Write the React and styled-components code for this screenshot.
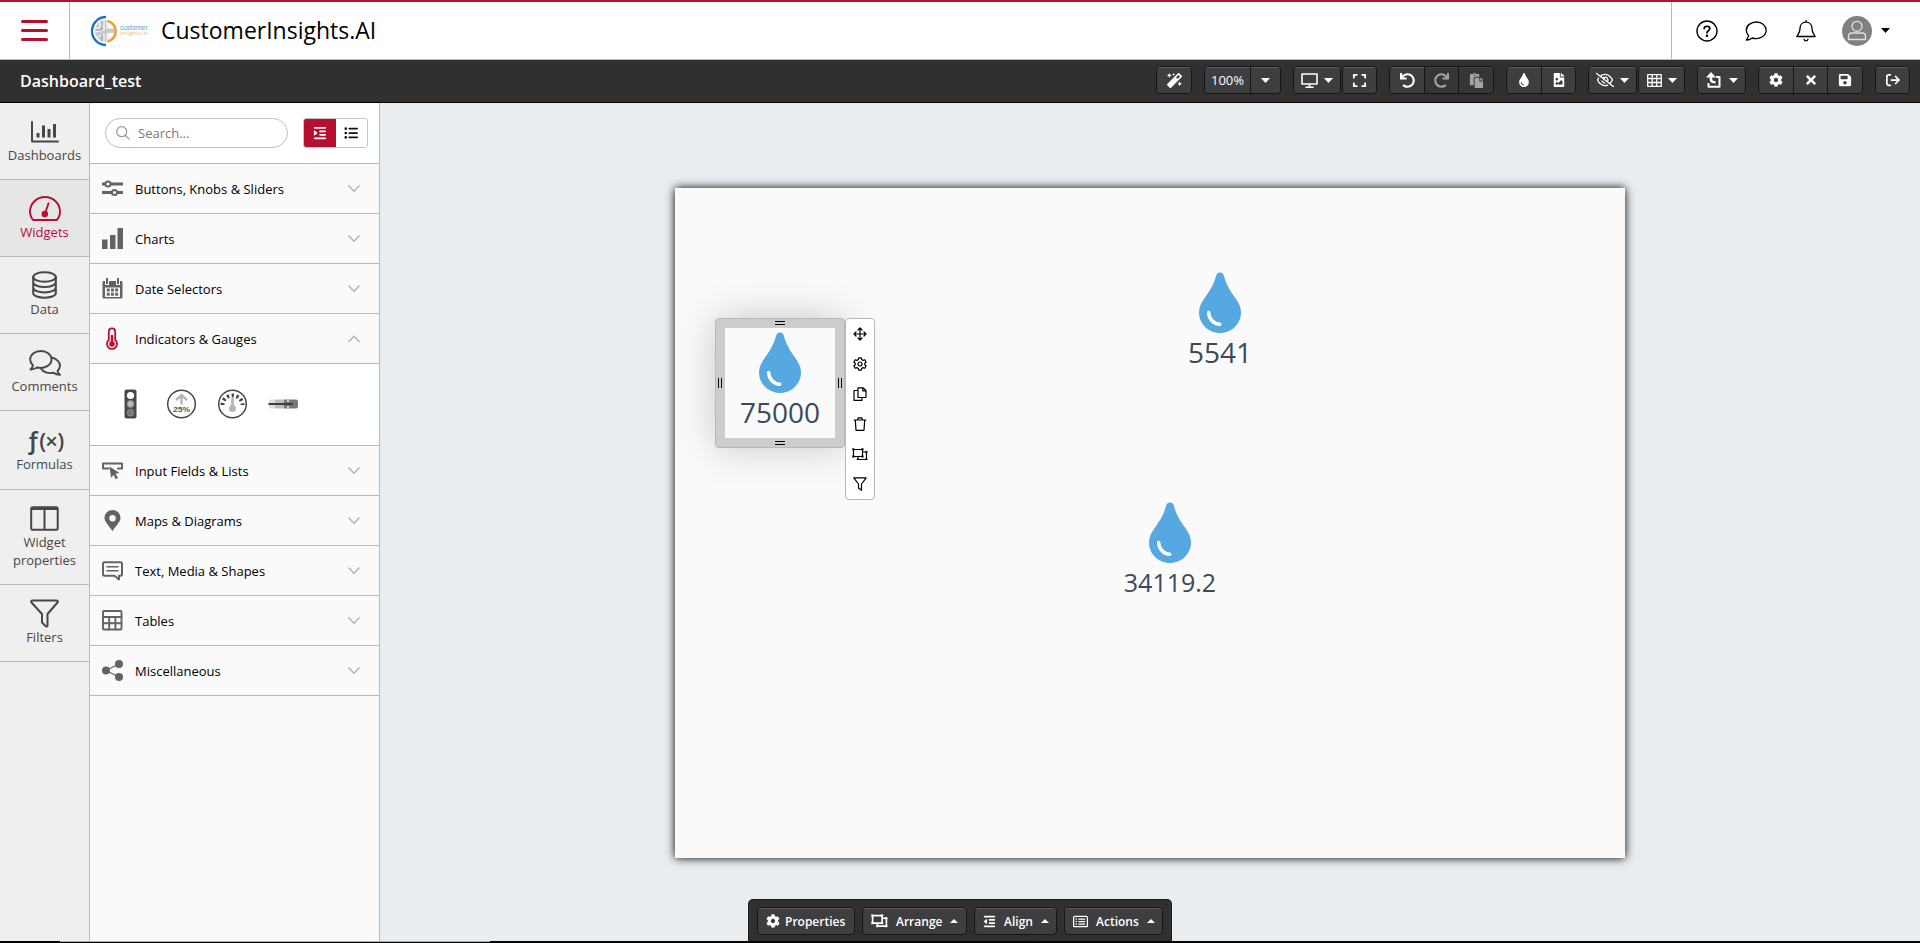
import React from "react";
import styled, { createGlobalStyle, css } from "styled-components";
import {
  FaMagic, FaUndo, FaRedo, FaPaste, FaTint, FaFileImage, FaCog, FaTimes, FaSave,
} from "react-icons/fa";
import {
  FaExpand, FaArrowRightFromBracket, FaIndent, FaOutdent, FaListUl, FaRegEyeSlash, FaRegRectangleList,
} from "react-icons/fa6";

const RED = "#b70f2f";
const LINE = "#b9b9b9";

const Global = createGlobalStyle`
  * { box-sizing: border-box; }
  body { margin: 0; font-family: "Open Sans", "Noto Sans", sans-serif; font-size: 13px; color: #000; overflow: hidden; }
  svg { display: block; flex: none; }
`;

const Page = styled.div`
  display: flex;
  flex-direction: column;
  height: 943px;
  background: #e9edf0;
`;

const Header = styled.header`
  display: flex;
  height: 60px;
  border-top: 2px solid ${RED};
  border-bottom: 1px solid ${LINE};
  background: #fff;
`;
const MenuCell = styled.div`
  width: 70px;
  border-right: 1px solid ${LINE};
  padding: 18px 0 0 21px;
`;
const Brand = styled.div`
  flex: 1;
  display: flex;
  align-items: center;
  padding-left: 20px;
`;
const BrandName = styled.h1`
  margin: 0 0 2px 8px;
  font-size: 23px;
  line-height: 30px;
  font-weight: 500;
`;
const HeaderTools = styled.div`
  width: 249px;
  border-left: 1px solid ${LINE};
  display: flex;
  align-items: center;
  padding-left: 24px;
`;
const HeaderIcon = styled.div`
  width: 22px;
  margin-right: ${(p) => p.$gap}px;
`;
const Avatar = styled.div`
  width: 30px;
  height: 30px;
  border-radius: 50%;
  background: #808080;
  margin-right: 9px;
`;

const Bar = styled.div`
  height: 43px;
  background: #303031;
  border-bottom: 1px solid #000;
  display: flex;
  padding: 6px 10px 0 20px;
`;
const BarTitle = styled.div`
  flex: 1;
  color: #fff;
  font-weight: 600;
  font-size: 16px;
  line-height: 30px;
`;
const Group = styled.div`
  display: flex;
  height: 28px;
  margin-left: ${(p) => p.$gap ?? 12}px;
  border: 1px solid #151516;
  border-radius: 4px;
  overflow: hidden;
`;
const BarButton = styled.div`
  width: ${(p) => p.$w}px;
  display: flex;
  align-items: center;
  justify-content: center;
  gap: ${(p) => p.$gap ?? 6}px;
  background: #3e3e40;
  color: #fff;
  font-size: ${(p) => p.$size ?? 13}px;
  box-shadow: inset 0 1px 0 #5f5f62;
  & + & { border-left: 1px solid #151516; }
  ${(p) => p.$off && css`color: #a3a3a3; background: #363638; box-shadow: inset 0 1px 0 #454548;`}
`;

const Main = styled.div`
  display: flex;
  height: 838px;
`;
const Nav = styled.nav`
  width: 90px;
  background: #efefef;
  border-right: 1px solid ${LINE};
`;
const NavItem = styled.div`
  height: ${(p) => p.$h}px;
  border-bottom: 1px solid ${LINE};
  display: flex;
  flex-direction: column;
  align-items: center;
  padding-top: ${(p) => p.$top}px;
  text-align: center;
  line-height: 18px;
  color: ${(p) => (p.$active ? RED : "#474747")};
  background: ${(p) => (p.$active ? "#e6e6e6" : "transparent")};
`;
const NavGlyph = styled.div`
  height: ${(p) => p.$h}px;
`;

const Panel = styled.aside`
  width: 290px;
  background: #fafafa;
  border-right: 1px solid ${LINE};
`;
const SearchRow = styled.div`
  height: 61px;
  background: #fff;
  border-bottom: 1px solid ${LINE};
  padding: 15px 11px 0 15px;
  display: flex;
  justify-content: space-between;
`;
const SearchBox = styled.div`
  width: 183px;
  height: 30px;
  border: 1px solid #bfbfbf;
  border-radius: 15px;
  display: flex;
  align-items: center;
  gap: 8px;
  padding-left: 10px;
  color: #777;
`;
const ViewSwitch = styled.div`
  width: 65px;
  height: 30px;
  border: 1px solid #c4c4c4;
  border-radius: 3px;
  overflow: hidden;
  display: flex;
`;
const ViewButton = styled.div`
  flex: 1;
  display: flex;
  align-items: center;
  justify-content: center;
  font-size: 14px;
  color: ${(p) => (p.$on ? "#fff" : "#111")};
  background: ${(p) => (p.$on ? RED : "#fff")};
`;
const Section = styled.div`
  height: 50px;
  border-bottom: 1px solid ${LINE};
  display: flex;
  align-items: center;
  padding: 0 19px 0 12px;
`;
const SectionIcon = styled.div`
  width: 22px;
  margin-right: 11px;
  color: ${(p) => (p.$open ? RED : "#636363")};
`;
const SectionLabel = styled.div`
  flex: 1;
  white-space: nowrap;
`;
const WidgetTray = styled.div`
  height: 82px;
  background: #fff;
  border-bottom: 1px solid ${LINE};
  display: flex;
  align-items: center;
  gap: 21px;
  padding: 0 0 1px 25px;
`;

const Stage = styled.main`
  flex: 1;
  position: relative;
`;
const Sheet = styled.div`
  position: absolute;
  left: 295px;
  top: 85px;
  width: 950px;
  height: 670px;
  background: #fafafa;
  box-shadow: 0 0 9px #000;
`;
const Gauge = styled.div`
  position: absolute;
  left: ${(p) => p.$x}px;
  top: ${(p) => p.$y}px;
  width: 110px;
  height: 110px;
  display: flex;
  flex-direction: column;
  align-items: center;
  padding-top: 4px;
`;
const GaugeValue = styled.div`
  font-size: ${(p) => p.$size}px;
  font-weight: 500;
  line-height: 36px;
  color: #3c4a57;
`;
const Selection = styled.div`
  position: absolute;
  left: 40px;
  top: 130px;
  width: 130px;
  height: 130px;
  border: 1px solid #b8b8b8;
  border-radius: 4px;
  background: #cdcdcd;
  box-shadow: 0 0 40px rgba(0, 0, 0, 0.2);
  display: grid;
  grid-template: 9px 110px 9px / 9px 110px 9px;
  place-items: center;
`;
const SelectionHole = styled.div`
  grid-area: 2 / 2;
  width: 110px;
  height: 110px;
  background: #fafafa;
`;
const Grip = styled.div`
  grid-area: ${(p) => p.$area};
  margin: ${(p) => p.$nudge};
  width: ${(p) => (p.$vertical ? 4 : 10)}px;
  height: ${(p) => (p.$vertical ? 10 : 4)}px;
  border: solid #000;
  border-width: ${(p) => (p.$vertical ? "0 1px" : "1px 0")};
`;
const SideTools = styled.div`
  position: absolute;
  left: 170px;
  top: 130px;
  width: 30px;
  height: 182px;
  background: #fff;
  border: 1px solid #b8b8b8;
  border-radius: 4px;
  display: flex;
  flex-direction: column;
`;
const SideTool = styled.div`
  height: 30px;
  display: flex;
  align-items: center;
  justify-content: center;
`;

const Dock = styled.div`
  position: absolute;
  left: 368px;
  bottom: 0;
  width: 424px;
  height: 42px;
  background: #303031;
  border: 1px solid #1c1c1c;
  border-bottom: 0;
  border-radius: 5px 5px 0 0;
  display: flex;
  gap: 7px;
  padding: 7px 8px;
`;
const DockButton = styled.div`
  width: ${(p) => p.$w}px;
  height: 28px;
  border: 1px solid #151516;
  border-radius: 4px;
  background: #3e3e40;
  box-shadow: inset 0 1px 0 #5f5f62;
  color: #fff;
  font-size: 12px;
  font-weight: 600;
  display: flex;
  align-items: center;
  padding: 0 8px;
  gap: ${(p) => p.$gap}px;
`;
const Footer = styled.div`
  height: 2px;
  background: #000;
`;
const FooterThumb = styled.div`
  margin-left: 60px;
  width: 430px;
  height: 1px;
  background: #aaa;
`;

const Svg = ({ w, h = w, box, sw = 1.5, children }) => (
  <svg width={w} height={h} viewBox={box || `0 0 ${w} ${h}`} fill="none" stroke="currentColor"
    strokeWidth={sw} strokeLinejoin="round" strokeLinecap="round">{children}</svg>
);

const Caret = ({ up, w = 9, h = 5 }) => (
  <svg width={w} height={h} viewBox="0 0 10 5" fill="currentColor" preserveAspectRatio="none">
    <path d={up ? "M0 5L5 0L10 5Z" : "M0 0H10L5 5Z"} />
  </svg>
);
const Chevron = ({ up }) => (
  <svg width="12" height="8" viewBox="0 0 12 8" fill="none" stroke="#b0b0b0" strokeWidth="1.300">
    <path d={up ? "M.5 7L6 1.2L11.5 7" : "M.5 .5L6 6.3L11.5 .5"} />
  </svg>
);

const Logo = () => (
  <svg width="63" height="32" viewBox="0 0 63 32" fill="none">
    <path d="M16 2A14 14 0 0 0 16 30" stroke="#1d75bb" strokeWidth="2.400" />
    <path d="M17.500 6A10.500 10.500 0 0 1 17.500 26.500" stroke="#e9a040" strokeWidth="2.600" />
    <path d="M16 5A11 11 0 0 0 16 27L18 27V18H24V13H18V5Z" fill="#c9cacc" />
    <path d="M10 7V13H5M14 5V15L5 17M7 22L14 19V27M17 7V13H23M17 26V19H23M10 9L14 12" stroke="#fff" strokeWidth="1" />
    <path d="M12 6V15H6M12 26V19" stroke="#8d9196" strokeWidth=".8" />
    <text x="30" y="14.500" fontFamily="Open Sans" fontSize="6.600" fontWeight="600" fill="#79b5e2" textLength="28">customer</text>
    <text x="30" y="20" fontFamily="Open Sans" fontSize="6" fill="#f0bd7c" textLength="28">insights.ai</text>
  </svg>
);

const Drop = () => (
  <svg width="42" height="62" viewBox="0 0 42 62">
    <path d="M21 .5C19 .5 17.700 1.800 17.200 3.500C14.500 14 9.500 20.500 5 27C2 31.500 0 35.500 0 40.500C0 52 9.500 61 21 61S42 52 42 40.500C42 35.500 40 31.500 37 27C32.500 20.500 27.500 14 24.800 3.500C24.300 1.800 23 .5 21 .5Z" fill="#55a9e0" />
    <path d="M9.700 40.500C9.700 47 15 52 20.800 52.200" stroke="#fff" strokeWidth="3.400" strokeLinecap="round" fill="none" />
  </svg>
);

const Trans = ({ s = 16, w = 1.2 }) => (
  <Svg w={s} h={s * 0.8} box="0 0 16 12.8" sw={w}>
    <path d="M1.500 1.500H10.500V8.500H1.500ZM10.500 4H14.500V11.500H6V8.500" />
    <path d="M.6 .6h1.500v1.500H.6ZM9.800 .6h1.500v1.500H9.800ZM.6 7.800h1.500v1.500H.6ZM9.800 7.800h1.500v1.500H9.800ZM13.800 3.300h1.400v1.400h-1.400ZM13.800 10.800h1.400v1.400h-1.400ZM5.300 10.800h1.400v1.400H5.300Z" fill="currentColor" strokeWidth=".5" />
  </Svg>
);

const navIcons = {
  Dashboards: (
    <Svg w={28} h={22} sw={2}><path d="M1 1V20.500H27" /><path d="M7 12V16.500M12.500 4.500V16.500M18 8V16.500M23.500 3V16.500" strokeWidth="3" strokeLinecap="butt" /></Svg>
  ),
  Widgets: (
    <Svg w={32} h={25} sw={1.900}>
      <path d="M4.300 24C2.300 22 1 19 1 15.500A15 14.500 0 0 1 31 15.500C31 19 29.700 22 27.700 24Z" />
      <path d="M19.500 7.500L16.500 16" /><circle cx="15.800" cy="18" r="2.300" fill="currentColor" />
    </Svg>
  ),
  Data: (
    <Svg w={25} h={28} sw={2}>
      <ellipse cx="12.500" cy="6" rx="11.300" ry="4.800" />
      <path d="M1.200 6V22C1.200 28.300 23.800 28.300 23.800 22V6M1.200 11C1.200 17.600 23.800 17.600 23.800 11M1.200 16.500C1.200 23 23.800 23 23.800 16.500" />
    </Svg>
  ),
  Comments: (
    <Svg w={32} h={26} sw={1.900}>
      <path d="M12 1C5.500 1 1.200 5 1.200 9.500C1.200 12 2.300 14 4 15.500C3.500 17.500 2.500 18.500 1.500 19.500C4 19.500 6.500 18.500 8 17.500C16 19 22.500 15 22.500 9.500C22.500 5 18 1 12 1Z" />
      <path d="M22.500 7.500C27.500 8.500 31 12 31 15.500C31 18 30 19.500 28.500 21C29 23 30 24 31 24.800C28.500 24.800 26 24 24.500 22.800C19 24 14 22 12 18.500" />
    </Svg>
  ),
  "Widget properties": (
    <Svg w={29} h={25} sw={2}><rect x="1.200" y="1.200" width="26.500" height="22.500" rx="1.500" /><path d="M2 3H27M14.500 3V23" /></Svg>
  ),
  Filters: (
    <Svg w={29} h={29} sw={2}><path d="M2 1.500H27C28 1.500 28 3 27.500 3.500L17.500 15V26.500C17.500 27.500 16.500 27.800 15.500 27L12 23.500V15L1.500 3.500C1 3 1 1.500 2 1.500Z" /></Svg>
  ),
};

const FxMark = styled.div`
  font: 600 22px/26px "Open Sans", sans-serif;
  letter-spacing: -0.8px;
  white-space: nowrap;
  span { font-size: 25px; }
`;

const nav = [
  { label: "Dashboards", h: 77, top: 18, glyph: 25 },
  { label: "Widgets", h: 77, top: 16, glyph: 27 },
  { label: "Data", h: 77, top: 14, glyph: 29 },
  { label: "Comments", h: 77, top: 16, glyph: 27 },
  { label: "Formulas", h: 79, top: 15, glyph: 29 },
  { label: "Widget properties", h: 95, top: 16, glyph: 27 },
  { label: "Filters", h: 77, top: 14, glyph: 29 },
];

const solid = { fill: "currentColor", stroke: "none" };
const sectionIcons = {
  sliders: (
    <Svg w={21} h={17} sw={2.600}>
      <path d="M0 4H3.500M9 4H21M0 12.500H9M15.500 12.500H21" strokeWidth="3" strokeLinecap="butt" />
      <circle cx="6" cy="4" r="2.600" strokeWidth="2" /><circle cx="12.500" cy="12.500" r="2.600" strokeWidth="2" />
    </Svg>
  ),
  charts: <Svg w={21}><path d="M0 11.500H5.500V21H0ZM8 7H13.500V21H8ZM15.500 0H21V21H15.500Z" {...solid} /></Svg>,
  date: (
    <Svg w={21} h={21}>
      <path d="M2 3H3V7H7V3H14V7H18V3H19C20 3 20.500 3.500 20.500 4.500V19C20.500 20 20 20.500 19 20.500H2C1 20.500 .5 20 .5 19V4.500C.5 3.500 1 3 2 3Z" {...solid} />
      <path d="M4 0H6V6H4ZM15 0H17V6H15Z" {...solid} />
      <path d="M3 9.500H18V19H3Z" fill="#fafafa" stroke="none" />
      <path d="M4.800 12H16.500M4.800 16.200H16.500" strokeWidth="2.900" strokeDasharray="2.900 1.300" strokeLinecap="butt" />
    </Svg>
  ),
  thermo: (
    <Svg w={21} h={23} sw={1.800}>
      <path d="M6.800 4.500A3.200 3.200 0 0 1 13.200 4.500V13A5 5 0 1 1 6.800 13Z" />
      <path d="M10 9V16" strokeWidth="2.400" /><circle cx="10" cy="17" r="2.800" {...solid} />
    </Svg>
  ),
  input: (
    <Svg w={21} h={18} sw={2}>
      <path d="M6.500 6.500H1V1.500H20V6.500H16" />
      <path d="M7.500 4.500L17.500 11L13.500 11.800L16 16L13.800 17.200L11.500 13L9 15.800Z" {...solid} />
    </Svg>
  ),
  text: (
    <Svg w={21} h={20} sw={2}>
      <path d="M2.500 1.200H18.500Q20 1.200 20 2.700V13.200Q20 14.700 18.500 14.700H17V18.500L12.500 14.700H2.500Q1 14.700 1 13.200V2.700Q1 1.200 2.500 1.200Z" />
      <path d="M5 5.800H16M5 9.800H16" strokeWidth="1.600" />
    </Svg>
  ),
  table: (
    <Svg w={21} h={21} sw={1.900}>
      <rect x="1" y="1" width="18.500" height="18.500" rx="1" />
      <path d="M1 7H19.500M1 13.200H19.500M7.200 7V19.500M13.400 7V19.500" />
    </Svg>
  ),
  share: (
    <Svg w={21} h={21} sw={1.300}>
      <path d="M17 4L4 10.500L17 17" />
      <circle cx="17" cy="4" r="4" {...solid} /><circle cx="4" cy="10.500" r="4" {...solid} /><circle cx="17" cy="17" r="4" {...solid} />
    </Svg>
  ),
  map: (
    <Svg w={21} h={21}>
      <path fillRule="evenodd" d="M10.500 0A8 8 0 0 0 2.500 8C2.500 12 8 17 10.500 21C13 17 18.500 12 18.500 8A8 8 0 0 0 10.500 0ZM10.500 5A3.200 3.200 0 1 1 10.500 11.400A3.200 3.200 0 1 1 10.500 5Z" {...solid} />
    </Svg>
  ),
};

const sectionsTop = [
  ["Buttons, Knobs & Sliders", "sliders"],
  ["Charts", "charts"],
  ["Date Selectors", "date"],
];
const sectionsBottom = [
  ["Input Fields & Lists", "input"],
  ["Maps & Diagrams", "map"],
  ["Text, Media & Shapes", "text"],
  ["Tables", "table"],
  ["Miscellaneous", "share"],
];

const SectionRow = ({ label, icon, open }) => (
  <Section>
    <SectionIcon $open={open}>{sectionIcons[icon]}</SectionIcon>
    <SectionLabel>{label}</SectionLabel>
    <Chevron up={open} />
  </Section>
);

const TrayIcons = () => (
  <>
    <svg width="30" height="30" viewBox="0 0 30 30">
      <rect x="9.500" y=".5" width="12" height="29" rx="2" fill="#484848" />
      <circle cx="15.500" cy="6.500" r="3.600" fill="#fff" /><circle cx="15.500" cy="15" r="3.400" fill="#bbb" stroke="#888" /><circle cx="15.500" cy="23.700" r="3.400" fill="#777" stroke="#999" strokeWidth=".6" />
    </svg>
    <svg width="30" height="30" viewBox="0 0 30 30">
      <circle cx="15.500" cy="15" r="13.800" fill="#fff" stroke="#484848" strokeWidth="1.500" />
      <path d="M15.500 15.500V7M10 11L15.500 6L21 11" fill="none" stroke="#b5b5b5" strokeWidth="2.400" />
      <text x="15.500" y="22.500" textAnchor="middle" fontFamily="Liberation Sans" fontWeight="700" fontSize="7" textLength="17" lengthAdjust="spacingAndGlyphs" fill="#555">25%</text>
    </svg>
    <svg width="30" height="30" viewBox="0 0 30 30" fill="none">
      <circle cx="15.500" cy="15" r="13.800" fill="#fff" stroke="#484848" strokeWidth="1.500" />
      <path d="M5.500 16A10 9.500 0 0 1 25.500 16" stroke="#444" strokeWidth="4" strokeDasharray="2.200 2.600" />
      <path d="M15.500 9V19" stroke="#b5b5b5" strokeWidth="2.600" /><circle cx="15.500" cy="19.500" r="3.500" fill="#b5b5b5" />
    </svg>
    <svg width="30" height="30" viewBox="0 0 30 30">
      <path d="M1 10.500H8V19.500H1Z" fill="#e0e0e0" /><path d="M7 10.500H17V19.500H7Z" fill="#bdbdbd" />
      <path d="M16 10.500H28Q30 10.500 30 12.500V17.500Q30 19.500 28 19.500H16Z" fill="#777" />
      <path d="M.5 15H25" stroke="#3f3f3f" strokeWidth="2" /><path d="M20 10.500V13M20 17V19.500" stroke="#eee" strokeWidth="1.500" />
    </svg>
  </>
);

export default function App() {
  return (
    <Page>
      <Global />
      <Header>
        <MenuCell>
          <Svg w={27} h={22} sw={3}><path d="M1.500 1.500H25.500M1.500 10.500H25.500M1.500 19.500H25.500" stroke={RED} /></Svg>
        </MenuCell>
        <Brand><Logo /><BrandName>CustomerInsights.AI</BrandName></Brand>
        <HeaderTools>
          <HeaderIcon $gap={27}>
            <Svg w={22} sw={1.400}><circle cx="11" cy="11" r="10" /><path d="M8.200 8.500C8.200 5.500 13.800 5.500 13.800 8.600C13.800 10.800 11 10.600 11 12.800" strokeWidth="1.700" /><circle cx="11" cy="15.700" r=".6" fill="currentColor" /></Svg>
          </HeaderIcon>
          <HeaderIcon $gap={28}>
            <Svg w={22} sw={1.300}><path d="M11.500 2C5.700 2 1.300 5.600 1.300 10.200C1.300 12.300 2.200 14.200 3.600 15.700C3.200 17.700 2.200 19.100 1.200 20.100C3.700 20.100 5.800 19.100 7.200 18C14.500 20 21.200 16 21.200 10.300C21.200 5.600 17 2 11.500 2Z" /></Svg>
          </HeaderIcon>
          <HeaderIcon $gap={25}>
            <Svg w={22} sw={1.300}><path d="M11 .6V2.200M11 2.200C7 2.200 5 5.200 5 8.500C5 13 3 14 1.800 16.500H20.200C19 14 17 13 17 8.500C17 5.200 15 2.200 11 2.200ZM9 19.200C9.500 21.500 12.500 21.500 13 19.200" /></Svg>
          </HeaderIcon>
          <Avatar>
            <svg width="30" height="30" viewBox="0 0 30 30" fill="none" stroke="#e2e2e2" strokeWidth="1.300">
              <circle cx="15" cy="10.300" r="5" /><path d="M6.500 23.500V20.500Q6.500 17 10 17H20Q23.500 17 23.500 20.500V23.500Z" />
            </svg>
          </Avatar>
          <Caret />
        </HeaderTools>
      </Header>

      <Bar>
        <BarTitle>Dashboard_test</BarTitle>
        <Group><BarButton $w={34} $size={15}><FaMagic /></BarButton></Group>
        <Group>
          <BarButton $w={45}>100%</BarButton>
          <BarButton $w={30}><Caret /></BarButton>
        </Group>
        <Group>
          <BarButton $w={46}>
            <Svg w={17} h={15} sw={1.600}><path d="M1 1H16V11H1ZM8.500 11V14M5 14.200H12" /></Svg>
            <Caret />
          </BarButton>
        </Group>
        <Group $gap={1}><BarButton $w={33} $size={15}><FaExpand /></BarButton></Group>
        <Group>
          <BarButton $w={34} $size={15}><FaUndo /></BarButton>
          <BarButton $w={34} $size={15} $off><FaRedo /></BarButton>
          <BarButton $w={35} $size={15} $off><FaPaste /></BarButton>
        </Group>
        <Group>
          <BarButton $w={34} $size={14}><FaTint /></BarButton>
          <BarButton $w={34} $size={14}><FaFileImage /></BarButton>
        </Group>
        <Group>
          <BarButton $w={47} $size={18}><FaRegEyeSlash /><Caret /></BarButton>
        </Group>
        <Group $gap={1}>
          <BarButton $w={45}>
            <Svg w={15} h={13} sw={1.300}><path d="M.7 .7H14.300V12.300H.7ZM.7 4.500H14.300M.7 8.500H14.300M5.200 .7V12.300M9.800 .7V12.300" /></Svg>
            <Caret />
          </BarButton>
        </Group>
        <Group>
          <BarButton $w={47} $gap={8}>
            <Svg w={15} h={16} sw={2}>
              <path d="M2.500 11V14.700H13.500V5H10" strokeLinecap="butt" strokeWidth="2" />
              <path d="M5 4V7.500Q5 10.300 9.500 10.300" strokeWidth="2.600" strokeLinecap="butt" />
              <path d="M0 5.500L5 0L10 5.500Z" {...solid} />
            </Svg>
            <Caret />
          </BarButton>
        </Group>
        <Group>
          <BarButton $w={34} $size={14}><FaCog /></BarButton>
          <BarButton $w={34} $size={14}><FaTimes /></BarButton>
          <BarButton $w={35} $size={14}><FaSave /></BarButton>
        </Group>
        <Group><BarButton $w={33} $size={14}><FaArrowRightFromBracket /></BarButton></Group>
      </Bar>

      <Main>
        <Nav>
          {nav.map((n) => (
            <NavItem key={n.label} $h={n.h} $top={n.top} $active={n.label === "Widgets"}>
              <NavGlyph $h={n.glyph}>{navIcons[n.label] || <FxMark><span>ƒ</span>(×)</FxMark>}</NavGlyph>
              {n.label}
            </NavItem>
          ))}
        </Nav>

        <Panel>
          <SearchRow>
            <SearchBox>
              <Svg w={14} sw={1.200}><g stroke="#999"><circle cx="5.700" cy="5.700" r="5" /><path d="M9.500 9.500L13.300 13.300" /></g></Svg>
              Search...
            </SearchBox>
            <ViewSwitch>
              <ViewButton $on><FaIndent /></ViewButton>
              <ViewButton><FaListUl /></ViewButton>
            </ViewSwitch>
          </SearchRow>
          {sectionsTop.map(([l, i]) => <SectionRow key={l} label={l} icon={i} />)}
          <SectionRow label="Indicators & Gauges" icon="thermo" open />
          <WidgetTray><TrayIcons /></WidgetTray>
          {sectionsBottom.map(([l, i]) => <SectionRow key={l} label={l} icon={i} />)}
        </Panel>

        <Stage>
          <Sheet>
            <Selection>
              <Grip $area="1 / 2" $nudge="0 0 1px" />
              <Grip $area="2 / 1" $nudge="0 1px 0 0" $vertical />
              <SelectionHole />
              <Grip $area="2 / 3" $nudge="0 0 0 1px" $vertical />
              <Grip $area="3 / 2" $nudge="1px 0 0" />
            </Selection>
            <Gauge $x={50} $y={140}><Drop /><GaugeValue $size={28}>75000</GaugeValue></Gauge>
            <Gauge $x={490} $y={80}><Drop /><GaugeValue $size={28}>5541</GaugeValue></Gauge>
            <Gauge $x={440} $y={310}><Drop /><GaugeValue $size={25}>34119.2</GaugeValue></Gauge>
            <SideTools>
              <SideTool><Svg w={14} sw={1.200}><path d="M7 1V13M1 7H13M5 3L7 1L9 3M5 11L7 13L9 11M3 5L1 7L3 9M11 5L13 7L11 9" /></Svg></SideTool>
              <SideTool><Svg w={14} sw={1.200}><circle cx="7" cy="7" r="2" /><path d="M5.700 .8H8.300L8.700 2.600L10.100 3.400L11.800 2.800L13.100 5L11.800 6.200V7.800L13.100 9L11.800 11.200L10.100 10.600L8.700 11.400L8.300 13.200H5.700L5.300 11.400L3.900 10.600L2.200 11.200L.9 9L2.200 7.800V6.200L.9 5L2.200 2.800L3.900 3.400L5.300 2.600Z" /></Svg></SideTool>
              <SideTool><Svg w={14} sw={1.200}><path d="M5 .8H10L13 3.500V10.500H5ZM9.800 .8V3.800H13M5 3.500H1V13.300H9V10.500" /></Svg></SideTool>
              <SideTool><Svg w={14} sw={1.200}><path d="M1 3H13M2.300 3L3 13.300H11L11.700 3M4.500 3L5.200 .8H8.800L9.500 3" /></Svg></SideTool>
              <SideTool><Trans /></SideTool>
              <SideTool><Svg w={14} sw={1.200}><path d="M.8 .8H13.200L8.500 7V13.300L5.500 11V7Z" /></Svg></SideTool>
            </SideTools>
          </Sheet>
          <Dock>
            <DockButton $w={98} $gap={5}><FaCog size={14} />Properties</DockButton>
            <DockButton $w={105} $gap={8}><Trans s={17} w={1.600} />Arrange<Caret up w={8} h={4} /></DockButton>
            <DockButton $w={83} $gap={8}><FaOutdent size={13} />Align<Caret up w={8} h={4} /></DockButton>
            <DockButton $w={99} $gap={8}><FaRegRectangleList size={15} />Actions<Caret up w={8} h={4} /></DockButton>
          </Dock>
        </Stage>
      </Main>
      <Footer><FooterThumb /></Footer>
    </Page>
  );
}
